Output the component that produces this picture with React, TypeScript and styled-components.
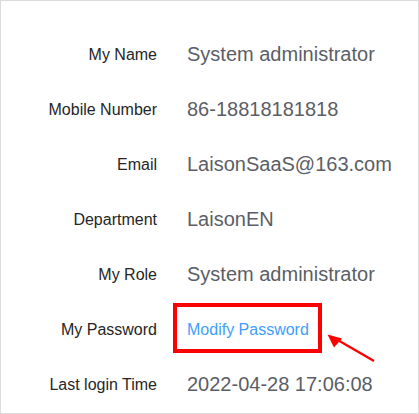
import React from "react";
import styled, { createGlobalStyle } from "styled-components";

const GlobalStyle = createGlobalStyle`
  html, body {
    margin: 0;
    padding: 0;
    background: #ffffff;
  }
  body {
    font-family: "Liberation Sans", Arial, sans-serif;
  }
`;

const Frame = styled.div`
  position: relative;
  box-sizing: border-box;
  width: 419px;
  height: 414px;
  border: 1px solid #dcdcdc;
  padding-top: 26px;
  background: #fff;
`;

const InfoGrid = styled.div`
  display: grid;
  grid-template-columns: 156px 1fr;
  column-gap: 30px;
  grid-auto-rows: 55px;
`;

const Label = styled.div`
  display: flex;
  align-items: center;
  justify-content: flex-end;
  font-size: 16px;
  color: #262626;
  white-space: nowrap;
`;

const Value = styled.div<{ $annotated?: boolean }>`
  position: ${(p) => (p.$annotated ? "relative" : "static")};
  display: flex;
  align-items: center;
  font-size: 20px;
  color: #5b5e66;
  white-space: nowrap;
`;

const LinkText = styled.a`
  font-size: 16px;
  color: #409eff;
  text-decoration: none;
  cursor: pointer;
`;

const Highlight = styled.span`
  position: absolute;
  box-sizing: border-box;
  left: -14px;
  top: 1px;
  width: 149px;
  height: 50px;
  border: 4px solid #ff0000;
  pointer-events: none;
`;

const Arrow = styled.svg`
  position: absolute;
  left: 320px;
  top: 325px;
  width: 60px;
  height: 40px;
  overflow: visible;
`;

const rows: { label: string; value: string }[] = [
  { label: "My Name", value: "System administrator" },
  { label: "Mobile Number", value: "86-18818181818" },
  { label: "Email", value: "LaisonSaaS@163.com" },
  { label: "Department", value: "LaisonEN" },
  { label: "My Role", value: "System administrator" },
];

export default function App() {
  return (
    <>
      <GlobalStyle />
      <Frame>
        <InfoGrid>
          {rows.map((r) => (
            <React.Fragment key={r.label}>
              <Label>{r.label}</Label>
              <Value>{r.value}</Value>
            </React.Fragment>
          ))}
          <Label>My Password</Label>
          <Value $annotated>
            <LinkText>Modify Password</LinkText>
            <Highlight />
          </Value>
          <Label>Last login Time</Label>
          <Value>2022-04-28 17:06:08</Value>
        </InfoGrid>
        <Arrow viewBox="0 0 60 40">
          <line x1="53" y1="35" x2="15" y2="13" stroke="#ff0000" strokeWidth="2.4" />
          <polygon points="6.5,8.5 21,12.5 13,21.5" fill="#ff0000" />
        </Arrow>
      </Frame>
    </>
  );
}
